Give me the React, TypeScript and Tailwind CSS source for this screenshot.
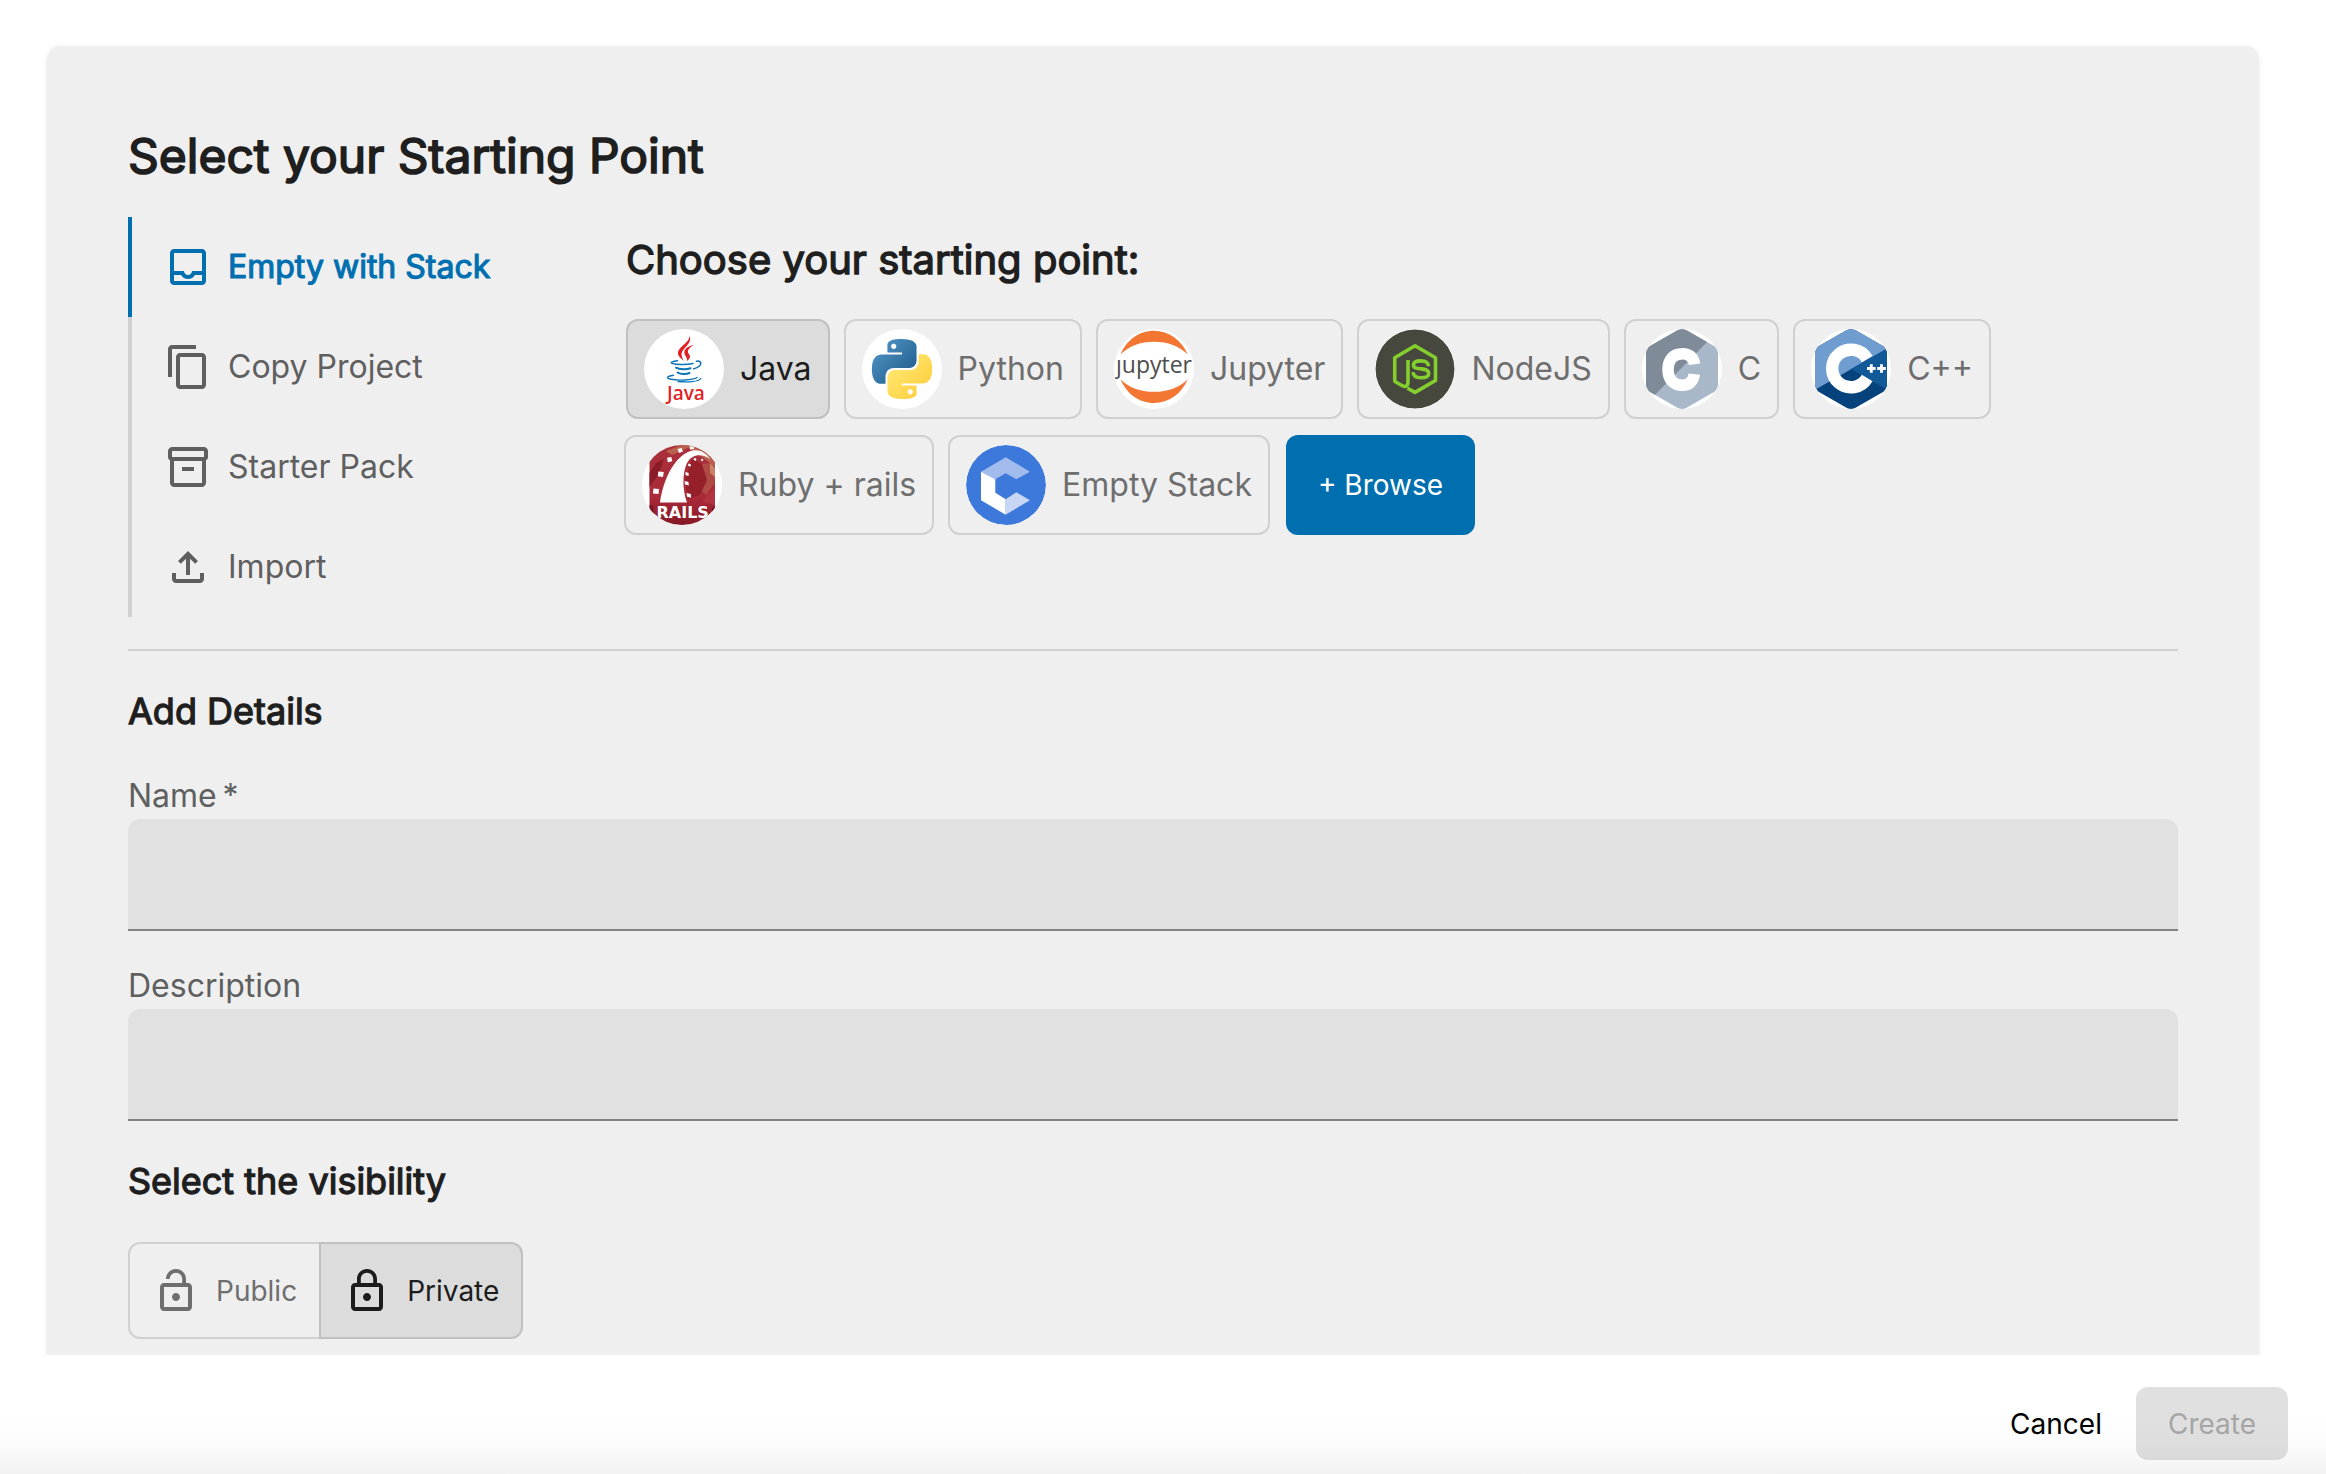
import { useState, type ReactNode } from "react";

const ICONS = {
  inbox:
    "M19 3H5c-1.1 0-2 .9-2 2v14c0 1.1.9 2 2 2h14c1.1 0 2-.9 2-2V5c0-1.1-.9-2-2-2zm0 16H5v-3h3.56c.69 1.19 1.97 2 3.45 2s2.75-.81 3.45-2H19v3zm0-5h-4.99c0 1.1-.9 2-2 2s-2-.9-2-2H5V5h14v9z",
  copy:
    "M16 1H4c-1.1 0-2 .9-2 2v14h2V3h12V1zm3 4H8c-1.1 0-2 .9-2 2v14c0 1.1.9 2 2 2h11c1.1 0 2-.9 2-2V7c0-1.1-.9-2-2-2zm0 16H8V7h11v14z",
  pack:
    "M20 2H4c-1 0-2 .9-2 2v3.01c0 .72.43 1.34 1 1.69V20c0 1.1 1.1 2 2 2h14c.9 0 2-.9 2-2V8.7c.57-.35 1-.97 1-1.69V4c0-1.1-1-2-2-2zm-1 18H5V9h14v11zm1-13H4V4h16v3zM9 12h6v2H9z",
  upload:
    "M18 15v3H6v-3H4v3c0 1.1.9 2 2 2h12c1.1 0 2-.9 2-2v-3h-2zM7 9l1.41 1.41L11 7.83V16h2V7.83l2.59 2.58L17 9l-5-5-5 5z",
  lockOpen:
    "M12 17c1.1 0 2-.9 2-2s-.9-2-2-2-2 .9-2 2 .9 2 2 2zm6-9h-1V6c0-2.76-2.24-5-5-5S7 3.24 7 6h1.9c0-1.71 1.39-3.1 3.1-3.1 1.71 0 3.1 1.39 3.1 3.1v2H6c-1.1 0-2 .9-2 2v10c0 1.1.9 2 2 2h12c1.1 0 2-.9 2-2V10c0-1.1-.9-2-2-2zm0 12H6V10h12v10z",
  lock:
    "M18 8h-1V6c0-2.76-2.24-5-5-5S7 3.24 7 6v2H6c-1.1 0-2 .9-2 2v10c0 1.1.9 2 2 2h12c1.1 0 2-.9 2-2V10c0-1.1-.9-2-2-2zM8.9 6c0-1.71 1.39-3.1 3.1-3.1s3.1 1.39 3.1 3.1v2H8.9V6zM18 20H6V10h12v10zm-6-3c1.1 0 2-.9 2-2s-.9-2-2-2-2 .9-2 2 .9 2 2 2z",
};

function Icon({ name }: { name: keyof typeof ICONS }) {
  return (
    <svg viewBox="0 0 24 24" className="size-12 shrink-0 fill-current" aria-hidden="true">
      <path d={ICONS[name]} />
    </svg>
  );
}

function Logo({ children }: { children: ReactNode }) {
  return (
    <svg viewBox="0 0 80 80" className="size-20 shrink-0 rounded-full bg-white" aria-hidden="true">
      {children}
    </svg>
  );
}

function JavaLogo() {
  return (
    <Logo>
      <g fill="#e11f26">
        <path d="M45.2 6C47.5 13 33.6 17.5 34 24.5c.2 3.5 3.8 5 5.6 7.7-1.6-5-3.4-7.2-.4-11.2C42.600 16.500 48.500 12.500 45.200 6z" />
        <path d="M50 15.800c-5 1.200-9.700 3.600-9.700 7.700 0 3.200 3.400 4.700 2.700 8.500 3.600-2.500 3.600-4.800 1.700-7.200-2.400-3.200 1.300-6.800 5.300-9z" />
      </g>
      <g fill="none" stroke="#0b75b8" strokeLinecap="round">
        <path strokeWidth="1.500" d="M33.500 31.700c-5 .4-7.700 1.700-5.300 2.700 4.500 1.700 15.300 1.400 20.800 0" />
        <path strokeWidth="1.600" d="M52.500 32.300c5.500-1.500 6.700 4.800-2.700 7.500" />
        <path strokeWidth="2" d="M32 38.700c3.500 1.900 11 1.900 14.500.5" />
        <path strokeWidth="2" d="M33.500 43.500c3 1.900 9 1.900 12 .5" />
        <path strokeWidth="1.400" d="M29.500 46.300c-6 .8-8 2.700-3.800 3.700 8 1.900 23 1.400 27.300-1.500" />
        <path strokeWidth="1.300" d="M34 52.500c9.500 1 20.500.3 22.800-3" />
      </g>
      <text x="23" y="70.500" fontSize="19" className="fill-[#e11f26] font-['Open_Sans',sans-serif] font-semibold">
        Java
      </text>
    </Logo>
  );
}

function PythonLogo() {
  return (
    <Logo>
      <defs>
        <linearGradient id="pyBlue" x1="0" y1="0" x2="1" y2="1">
          <stop offset="0.1" stopColor="#4f93c4" />
          <stop offset="0.9" stopColor="#1f5d8c" />
        </linearGradient>
        <linearGradient id="pyYellow" x1="0" y1="0" x2="1" y2="1">
          <stop offset="0.15" stopColor="#ffe873" />
          <stop offset="0.85" stopColor="#ffcf3e" />
        </linearGradient>
      </defs>
      <g transform="translate(10 10) scale(2.5)">
        <path
          fill="url(#pyBlue)"
          d="M14.250.180l.9.2.73.26.59.3.45.32.34.34.25.34.16.33.1.3.04.26.02.2-.01.13V8.500l-.05.63-.13.55-.21.46-.26.38-.3.31-.33.25-.35.19-.35.14-.33.1-.3.07-.26.04-.21.02H8.770l-.69.05-.59.14-.5.22-.41.27-.33.32-.27.35-.2.36-.15.37-.1.35-.07.32-.04.27-.02.21v3.060H3.170l-.21-.03-.28-.07-.32-.12-.35-.18-.36-.26-.36-.36-.35-.46-.32-.59-.28-.73-.21-.88-.14-1.050-.05-1.230.06-1.220.16-1.040.24-.87.32-.71.36-.57.4-.44.42-.33.42-.24.4-.16.36-.1.32-.05.24-.01h.16l.06.01h8.160v-.83H6.180l-.01-2.750-.02-.37.05-.34.11-.31.17-.28.25-.26.31-.23.38-.2.44-.18.51-.15.58-.12.64-.1.71-.06.77-.04.84-.02 1.270.05zm-6.300 1.980l-.23.33-.08.41.08.41.23.34.33.22.41.09.41-.09.33-.22.23-.34.08-.41-.08-.41-.23-.33-.33-.22-.41-.09-.41.09z"
        />
        <path
          fill="url(#pyYellow)"
          d="M21.040 6.110l.28.06.32.12.35.18.36.27.36.35.35.47.32.59.28.73.21.88.14 1.040.05 1.230-.06 1.230-.16 1.040-.24.86-.32.71-.36.57-.4.45-.42.33-.42.24-.4.16-.36.09-.32.05-.24.02-.16-.01h-8.220v.82h5.840l.01 2.760.02.36-.05.34-.11.31-.17.29-.25.25-.31.24-.38.2-.44.17-.51.15-.58.13-.64.09-.71.07-.77.04-.84.01-1.270-.04-1.070-.14-.9-.2-.73-.25-.59-.3-.45-.33-.34-.34-.25-.34-.16-.33-.1-.3-.04-.25-.02-.2.01-.13v-5.340l.05-.64.13-.54.21-.46.26-.38.3-.32.33-.24.35-.2.35-.14.33-.1.3-.06.26-.04.21-.02.13-.01h5.840l.69-.05.59-.14.5-.21.41-.28.33-.32.27-.35.2-.36.15-.36.1-.35.07-.32.04-.28.02-.21V6.070h2.090l.14.01zm-6.470 14.250l-.23.33-.08.41.08.41.23.33.33.23.41.08.41-.08.33-.23.23-.33.08-.41-.08-.41-.23-.33-.33-.23-.41-.08-.41.08z"
        />
      </g>
    </Logo>
  );
}

function JupyterLogo() {
  return (
    <Logo>
      <g fill="#f37733">
        <path d="M6.500 25.500C12.500 11 25 1.700 40 1.700S67.500 11 73.800 25.500C65 17 54 12.700 40 12.700S15 17 6.500 25.500z" />
        <path d="M6.500 50.200C12.500 64.700 25 74 40 74s27.500-9.300 33.800-23.800C65 58.700 54 62.800 40 62.800S15 58.700 6.500 50.200z" />
      </g>
      <text x="40" y="43.500" textAnchor="middle" fontSize="23" className="fill-[#4e4e4e] font-['Open_Sans',sans-serif]">
        ȷupyter
      </text>
    </Logo>
  );
}

function NodeLogo() {
  return (
    <Logo>
      <circle cx="40" cy="40" r="39.500" fill="#46483e" />
      <g fill="none" stroke="#84ce2e" strokeWidth="3.600" strokeLinejoin="round" strokeLinecap="butt">
        <path d="M33 31v21.500c0 4.500-2.300 6-5.700 4.200l-7-4Q19.700 52.300 19.700 51V28.700L40 16.800l20.500 11.900v22.800L40 63.400l-7.500-4.200" />
        <path d="M53.500 37.200c-.5-4-2.700-5.300-7.700-5.300-5 0-7.300 1.400-7.300 4.100 0 3.300 3.200 3.400 7.700 3.900 4.300.5 7.500 1 7.500 4.600 0 3-2.700 4.300-7.700 4.300-5.300 0-7.800-1.700-8-5.600" />
      </g>
    </Logo>
  );
}

const HEXAGON =
  "M35 1.500Q40-1.500 45 1.500L72 17Q76 19.500 76 24V56Q76 60.500 72 63L45 78.500Q40 81.500 35 78.500L8 63Q4 60.500 4 56V24Q4 19.500 8 17Z";

function CLogo() {
  return (
    <Logo>
      <clipPath id="cHex">
        <path d={HEXAGON} />
      </clipPath>
      <g clipPath="url(#cHex)">
        <path fill="#a9b8c9" d="M0 0h80v80H0z" />
        <path fill="#808b99" d="M0 0h78L0 79z" />
      </g>
      <path
        fill="none"
        stroke="#fff"
        strokeWidth="11.500"
        d="M52.500 35.200C51.500 28 47 24.700 40.500 24.700 31 24.700 26 31 26 40.500s5 15.800 14.500 15.800c6.500 0 11-3.800 11.800-11.100"
      />
    </Logo>
  );
}

function CppLogo() {
  return (
    <Logo>
      <clipPath id="cppHex">
        <path d={HEXAGON} />
      </clipPath>
      <g clipPath="url(#cppHex)">
        <path fill="#06437d" d="M0 0h80v80H0z" />
        <path fill="#6f9dd0" d="M0 0h80v17.500L0 63z" />
        <path fill="#125a97" d="M40 40 80 17.200v45.600z" />
      </g>
      <path fill="none" stroke="#fff" strokeWidth="12.400" d="M56.200 30A18.800 18.800 0 1 0 56.200 49" />
      <path
        stroke="#fff"
        strokeWidth="2.900"
        d="M56 39.500h8.600M60.300 35.200v8.600M66.200 39.500h8.600M70.500 35.200v8.600"
      />
    </Logo>
  );
}

function RailsLogo() {
  return (
    <Logo>
      <defs>
        <linearGradient id="railsRed" x1="0" y1="0" x2="0" y2="1">
          <stop offset="0" stopColor="#a8313a" />
          <stop offset="0.65" stopColor="#ab2a3a" />
          <stop offset="1" stopColor="#851826" />
        </linearGradient>
      </defs>
      <rect x="7.500" width="65.500" height="80" fill="url(#railsRed)" />
      <path fill="#b9604f" d="M24 6 40 0h33v22L60 12 46 3 30 10z" />
      <path fill="#95202a" d="M50 14l10 5 6 15-8 16-12 4-3-20z" />
      <path fill="#b04a45" d="M60 19l9-1 4 6v14l-9 12-4-4 5-11z" />
      <path fill="#c98467" d="M68 18l5 5v9l-5-4z" />
      <path fill="#b23440" d="M73 42 60 57l13 3z" />
      <path fill="#8a1b28" d="M7.500 42 16 30l6-16-8 4-6.500 10z" />
      <path fill="#7d1824" d="M7.500 60h4v20h-4zM70 62h3v18h-3z" />
      <path
        fill="#fff"
        d="M18 57.500C21 36 31 14 46 7c9-4 17-1 22.500 7.500C60 8 50 9 45 18c-5 11-4.500 27 0 39.500z"
      />
      <path
        fill="#fff"
        d="M35.500 4l4-1 1.500 3.400-4 1.500zM47.500 1.500l4-.2.500 2.700-3.700.5zM25 12.800l4.300-.8 1 4.300-4.500 1zM16.300 26.500l5.500.5-.8 5-5.200-.8zM11.500 43.500l5.500.5-.5 5-5.500-.5zM43.500 27l3.200 1-.2 3-3-1zM42.500 36l4 1 .3 3.500-3.800-1zM44.500 48l4.300 1 .3 3.800-4-1zM46.500 18.500l2.500 1-.6 2.300-2.400-1zM52.500 12.800l2 1.200-1 1.900-2-1.200zM60 13.500l1.500 1.500-1.300 1.300-1.400-1.400z"
      />
      <text x="14.500" y="72.500" fontSize="16" className="fill-white font-['DejaVu_Sans',sans-serif] font-bold">
        RAILS
      </text>
    </Logo>
  );
}

function EmptyLogo() {
  return (
    <Logo>
      <circle cx="40" cy="40" r="40" fill="#3c79da" />
      <path fill="#a0bbec" d="M39.700 12.200 64 26.700 50.300 34.300 39.700 28.300 29.300 34.300 15 26.700z" />
      <path fill="#fff" d="M15 26.700l14.300 7.600v13.400l10.400 6.600v15.400L15 55.300z" />
      <path fill="#c6d6f4" d="M39.700 54.300l10.600-7L64 55.300 39.700 69.700z" />
    </Logo>
  );
}

const TABS: { label: string; icon: keyof typeof ICONS }[] = [
  { label: "Empty with Stack", icon: "inbox" },
  { label: "Copy Project", icon: "copy" },
  { label: "Starter Pack", icon: "pack" },
  { label: "Import", icon: "upload" },
];

const STACKS: { label: string; logo: ReactNode }[] = [
  { label: "Java", logo: <JavaLogo /> },
  { label: "Python", logo: <PythonLogo /> },
  { label: "Jupyter", logo: <JupyterLogo /> },
  { label: "NodeJS", logo: <NodeLogo /> },
  { label: "C", logo: <CLogo /> },
  { label: "C++", logo: <CppLogo /> },
  { label: "Ruby + rails", logo: <RailsLogo /> },
  { label: "Empty Stack", logo: <EmptyLogo /> },
];

const SELECTED = "z-10 border-[#c0c0c0] bg-[#dcdcdc] text-[#1c1c1c]";
const UNSELECTED = "border-[#d0d0d0] text-[#6e6e6e]";

// Thickens the regular cut without changing its widths.
const HEAVY = "font-normal [-webkit-text-stroke:0.035em_currentColor]";

function Field({ id, label, required }: { id: string; label: string; required?: boolean }) {
  return (
    <div className="flex flex-col gap-[3px]">
      <label htmlFor={id} className="text-[32px] leading-10 text-[#5f5f5f]">
        {label}
        {required && <span aria-hidden="true">{"\u2009*"}</span>}
      </label>
      <input
        id={id}
        type="text"
        required={required}
        className="h-28 w-full rounded-t-xl border-b-2 border-[#838383] bg-[#e1e1e1] px-6 text-[32px] outline-none"
      />
    </div>
  );
}

export default function App() {
  const [tab, setTab] = useState("Empty with Stack");
  const [stack, setStack] = useState("Java");
  const [visibility, setVisibility] = useState("Private");

  return (
    <div className="relative flex min-h-screen flex-col bg-white font-[Inter,sans-serif] text-[#1f1f1f]">
      <main className="overflow-hidden pt-[46px] pr-[68px] pl-12">
        <div className="rounded-t-xl bg-[#efefef] px-20 pt-20 pb-4 shadow-[0_2px_2px_rgba(0,0,0,0.1),0_2px_6px_rgba(0,0,0,0.1)]">
          <h1 className={`mb-8 text-5xl leading-[59px] ${HEAVY}`}>Select your Starting Point</h1>

          <div className="grid grid-cols-[498px_1fr] border-b-2 border-[#d0d0d0] pb-8">
            <div role="tablist" aria-orientation="vertical" className="flex flex-col">
              {TABS.map(({ label, icon }) => (
                <button
                  key={label}
                  type="button"
                  role="tab"
                  aria-selected={tab === label}
                  onClick={() => setTab(label)}
                  className={`flex h-[100px] items-center gap-4 border-l-4 pl-8 text-[32px] ${
                    tab === label
                      ? `border-[#006fb0] text-[#006fb0] ${HEAVY}`
                      : "border-[#d0d0d0] text-[#5f5f5f]"
                  }`}
                >
                  <Icon name={icon} />
                  {label}
                </button>
              ))}
            </div>

            <section className="pt-[19px]">
              <h2 className={`mb-[35px] text-[40px] leading-12 ${HEAVY}`}>Choose your starting point:</h2>
              <div className="flex flex-wrap gap-4">
                {STACKS.map(({ label, logo }) => (
                  <button
                    key={label}
                    type="button"
                    aria-pressed={stack === label}
                    onClick={() => setStack(label)}
                    className={`-ml-[2px] flex h-[100px] items-center gap-4 rounded-xl border-2 px-4 text-[32px] first:ml-0 ${
                      stack === label ? SELECTED : UNSELECTED
                    }`}
                  >
                    {logo}
                    {label}
                  </button>
                ))}
                <button type="button" className="h-[100px] rounded-xl bg-[#006fb0] px-8 text-[28px] text-white">
                  + Browse
                </button>
              </div>
            </section>
          </div>

          <h2 className={`mt-[38px] mb-[43px] text-4xl leading-11 ${HEAVY}`}>Add Details</h2>
          <form className="flex flex-col gap-[35px]">
            <Field id="name" label="Name" required />
            <Field id="description" label="Description" />
          </form>

          <h2 className={`mt-[38px] mb-[39px] text-4xl leading-11 ${HEAVY}`}>Select the visibility</h2>
          <div role="group" aria-label="Visibility" className="flex">
            {(["Public", "Private"] as const).map((label) => (
              <button
                key={label}
                type="button"
                aria-pressed={visibility === label}
                onClick={() => setVisibility(label)}
                className={`-ml-[2px] flex h-[97px] items-center gap-4 border-2 px-[22px] text-[28px] first:ml-0 first:rounded-l-xl last:rounded-r-xl ${
                  visibility === label ? SELECTED : UNSELECTED
                }`}
              >
                <Icon name={label === "Public" ? "lockOpen" : "lock"} />
                {label}
              </button>
            ))}
          </div>
        </div>
      </main>

      <footer className="flex items-center justify-end gap-[2px] pt-8 pr-[38px] pb-[14px]">
        <button type="button" className="h-[73px] rounded-xl px-8 text-[28px] text-black">
          Cancel
        </button>
        <button type="button" disabled className="h-[73px] rounded-xl bg-[#e0e0e0] px-8 text-[28px] text-[#a6a6a6]">
          Create
        </button>
      </footer>

      <div className="pointer-events-none absolute inset-x-0 bottom-0 h-16 bg-linear-to-t from-black/5 via-black/1 to-transparent" />
    </div>
  );
}
